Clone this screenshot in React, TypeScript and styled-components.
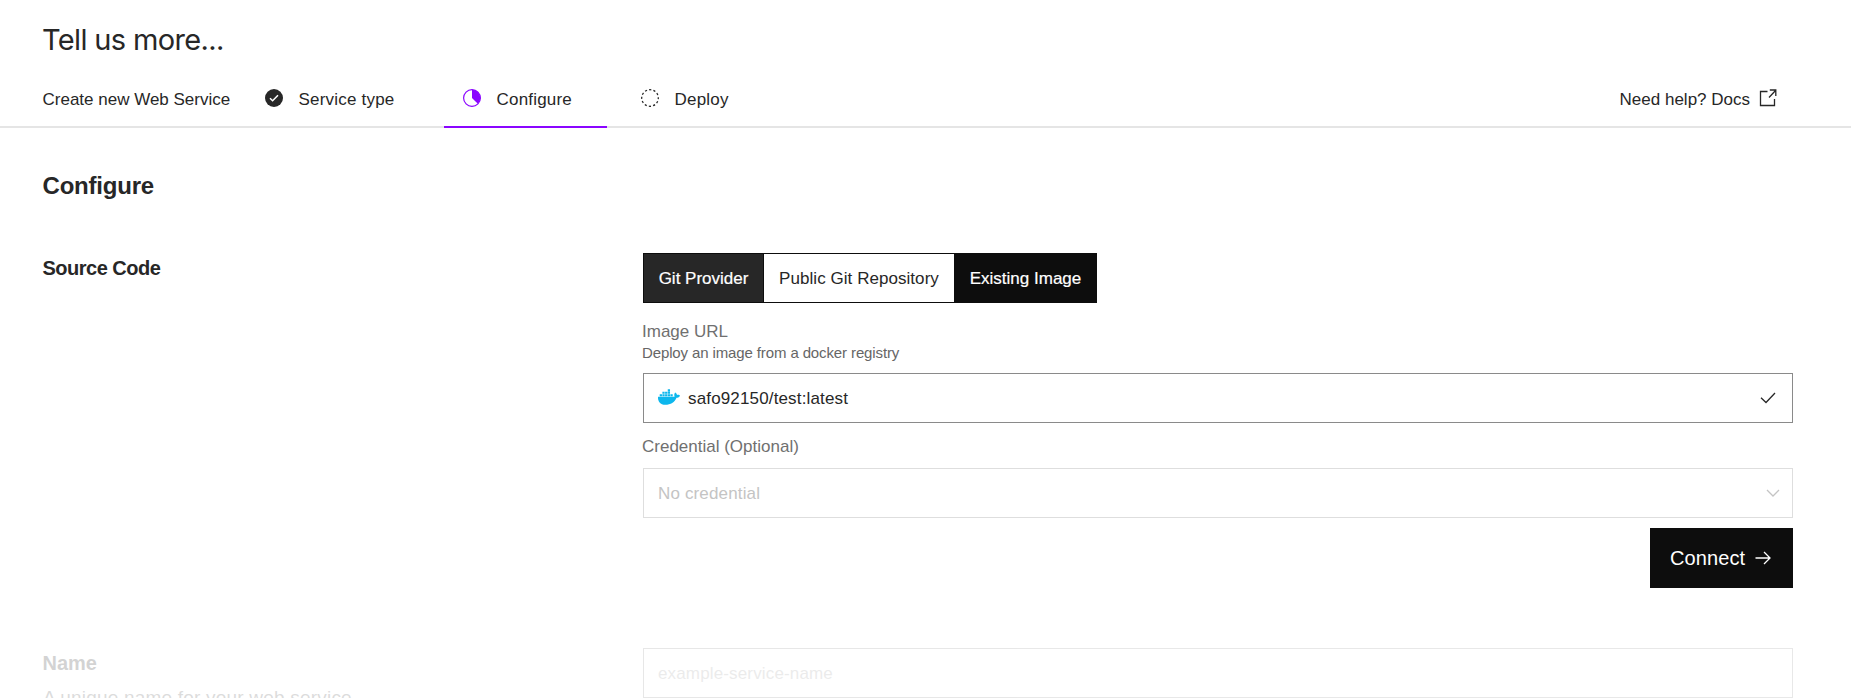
import React from "react";
import styled, { createGlobalStyle } from "styled-components";
import { FaDocker } from "react-icons/fa";

const ink = "#272727";
const purple = "#8a05ff";
const black = "#0d0d0d";

const GlobalStyle = createGlobalStyle`
  * { box-sizing: border-box; }
  html, body { margin: 0; background: #fff; overflow: hidden; }
  body { height: 698px; }
  body, button, input { font-family: "Liberation Sans", Arial, sans-serif; }
`;

const Page = styled.div`
  height: 698px;
  overflow: hidden;
  color: ${ink};
  font-size: 17px;
  line-height: 22px;
`;

const Title = styled.h1`
  margin: 0;
  padding: 7px 0 0 42px;
  font: 400 29px/65px Inter, sans-serif;
  letter-spacing: -0.65px;
`;

const Text = styled.span<{ $track?: number }>`
  padding-top: 2px;
  white-space: nowrap;
  letter-spacing: ${(p) => p.$track ?? 0}px;
`;

const Steps = styled.nav`
  display: flex;
  height: 56px;
  padding: 0 74px 0 42px;
  box-shadow: inset 0 -2px #e5e5e5;
`;

const StepsTitle = styled.div`
  width: 204px;
  padding-left: 0.5px;
  line-height: 56px;
`;

const Step = styled.div<{ $active?: boolean; $width: number }>`
  display: flex;
  align-items: center;
  gap: 15.5px;
  width: ${(p) => p.$width}px;
  margin-right: 15px;
  padding-left: 19px;
  border-bottom: 2px solid ${(p) => (p.$active ? purple : "transparent")};
  svg { margin-bottom: 2px; flex: none; }
`;

const Help = styled.a`
  display: flex;
  align-items: center;
  gap: 9px;
  margin-left: auto;
  padding-bottom: 2px;
  svg { margin-bottom: 3px; }
`;

const Content = styled.main`
  padding: 43px 58px 0 42px;
`;

const Heading = styled.h2`
  margin: 0 0 52px 0.5px;
  font-size: 24px;
  line-height: 30px;
  letter-spacing: -0.2px;
`;

const Row = styled.section<{ $faded?: boolean }>`
  display: grid;
  grid-template-columns: 601px 1fr;
  opacity: ${(p) => (p.$faded ? 0.2 : 1)};
`;

const RowTitle = styled.h3<{ $track?: number }>`
  margin: 4px 0 0 0.5px;
  font-size: 20px;
  line-height: 23px;
  letter-spacing: ${(p) => p.$track ?? 0}px;
`;

const RowNote = styled.p`
  margin: 11px 0 0 1px;
  font-size: 19px;
  line-height: 24px;
  color: #555;
  letter-spacing: 0.2px;
`;

const Fields = styled.div`
  display: flex;
  flex-direction: column;
`;

const Segments = styled.div`
  display: flex;
  width: 454px;
  height: 50px;
  border: 1px solid ${black};
`;

const Segment = styled.button<{ $width: number; $bg: string; $light?: boolean; $track?: number }>`
  width: ${(p) => p.$width}px;
  padding: 2px 0 0;
  border: 0;
  border-right: 1px solid ${black};
  background: ${(p) => p.$bg};
  color: ${(p) => (p.$light ? "#fff" : ink)};
  -webkit-text-stroke: ${(p) => (p.$light ? "0.2px #fff" : "0")};
  font-size: 17px;
  letter-spacing: ${(p) => p.$track ?? 0}px;
  white-space: nowrap;
  &:last-child { border-right: 0; }
`;

const Label = styled.label`
  margin-left: -1px;
  color: #707070;
`;

const Hint = styled.span`
  margin: -1px 0 0 -1px;
  font-size: 15px;
  color: #666;
  letter-spacing: -0.12px;
`;

const LabelGroup = styled.div`
  display: flex;
  flex-direction: column;
  padding: 18px 0 9px;
`;

const Box = styled.div<{ $border: string; $color: string; $right?: number }>`
  display: flex;
  align-items: center;
  height: 50px;
  padding: 0 ${(p) => p.$right ?? 16}px 0 14px;
  border: 1px solid ${(p) => p.$border};
  color: ${(p) => p.$color};
  > svg:last-child { margin-left: auto; }
`;

const DockerMark = styled(FaDocker)`
  width: 22px;
  height: 20px;
  margin: 0 8px 2px 0;
  color: #0db7ed;
`;

const CredentialLabel = styled(Label)`
  padding: 13px 0 10px;
`;

const Connect = styled.button`
  display: flex;
  align-items: center;
  justify-content: space-between;
  align-self: flex-end;
  width: 143px;
  height: 60px;
  margin: 10px 0 60px;
  padding: 0 22px 0 20px;
  border: 0;
  background: ${black};
  color: #fff;
  font-size: 20px;
  letter-spacing: 0.1px;
`;

const DoneIcon = () => (
  <svg width="18" height="18" viewBox="0 0 18 18" fill="none">
    <circle cx="9" cy="9" r="9" fill={ink} />
    <path d="M5 9.3l2.6 2.5L13 6.3" stroke="#fff" strokeWidth="1.5" />
  </svg>
);

const ProgressIcon = () => (
  <svg width="18" height="18" viewBox="0 0 18 18" fill="none">
    <circle cx="9" cy="9" r="8.4" stroke={purple} strokeWidth="1.2" />
    <path d="M9 0.8A8.2 8.2 0 0 1 14.8 14.8L9 9z" fill={purple} />
  </svg>
);

const PendingIcon = () => (
  <svg width="18" height="18" viewBox="0 0 18 18" fill="none">
    <circle cx="9" cy="9" r="8.3" stroke={ink} strokeWidth="1.3" strokeDasharray="2.2 2.145" strokeDashoffset="1.1" />
  </svg>
);

const ExternalIcon = () => (
  <svg width="18" height="18" viewBox="0 0 18 18" fill="none" stroke={ink} strokeWidth="1.3">
    <path d="M8.5 2.5H1.5v14h14V10M10 8.5L16.8 1.2M10.8 1H16.8V7" />
  </svg>
);

const CheckIcon = () => (
  <svg width="16" height="12" viewBox="0 0 16 12" fill="none" stroke={ink} strokeWidth="1.3">
    <path d="M1 5.8l5 4.7L15 1" />
  </svg>
);

const ChevronIcon = () => (
  <svg width="14" height="8" viewBox="0 0 14 8" fill="none" stroke="#c4c4c4" strokeWidth="1.3">
    <path d="M1 1l6 6 6-6" />
  </svg>
);

const ArrowIcon = () => (
  <svg width="16" height="14" viewBox="0 0 16 14" fill="none" stroke="#fff" strokeWidth="1.3">
    <path d="M0.5 7H15M9 1l6 6-6 6" />
  </svg>
);

export default function App() {
  return (
    <Page>
      <GlobalStyle />
      <Title>Tell us more...</Title>
      <Steps>
        <StepsTitle><Text>Create new Web Service</Text></StepsTitle>
        <Step $width={183}><DoneIcon /><Text $track={0.2}>Service type</Text></Step>
        <Step $width={163} $active><ProgressIcon /><Text $track={0.2}>Configure</Text></Step>
        <Step $width={150}><PendingIcon /><Text $track={0.2}>Deploy</Text></Step>
        <Help><Text>Need help? Docs</Text><ExternalIcon /></Help>
      </Steps>
      <Content>
        <Heading>Configure</Heading>
        <Row>
          <RowTitle $track={-0.5}>Source Code</RowTitle>
          <Fields>
            <Segments>
              <Segment $width={120} $bg={ink} $light>Git Provider</Segment>
              <Segment $width={191} $bg="#fff" $track={0.05}>Public Git Repository</Segment>
              <Segment $width={141} $bg={black} $light>Existing Image</Segment>
            </Segments>
            <LabelGroup>
              <Label>Image URL</Label>
              <Hint>Deploy an image from a docker registry</Hint>
            </LabelGroup>
            <Box $border="#8a8a8a" $color={ink}>
              <DockerMark />
              <Text $track={0.15}>safo92150/test:latest</Text>
              <CheckIcon />
            </Box>
            <CredentialLabel>Credential (Optional)</CredentialLabel>
            <Box $border="#dedede" $color="#c4c4c4" $right={12}>
              <Text $track={0.15}>No credential</Text>
              <ChevronIcon />
            </Box>
            <Connect>Connect<ArrowIcon /></Connect>
          </Fields>
        </Row>
        <Row $faded>
          <div>
            <RowTitle>Name</RowTitle>
            <RowNote>A unique name for your web service</RowNote>
          </div>
          <Box $border="#8a8a8a" $color="#a0a0a0">
            <Text $track={0.15}>example-service-name</Text>
          </Box>
        </Row>
      </Content>
    </Page>
  );
}
